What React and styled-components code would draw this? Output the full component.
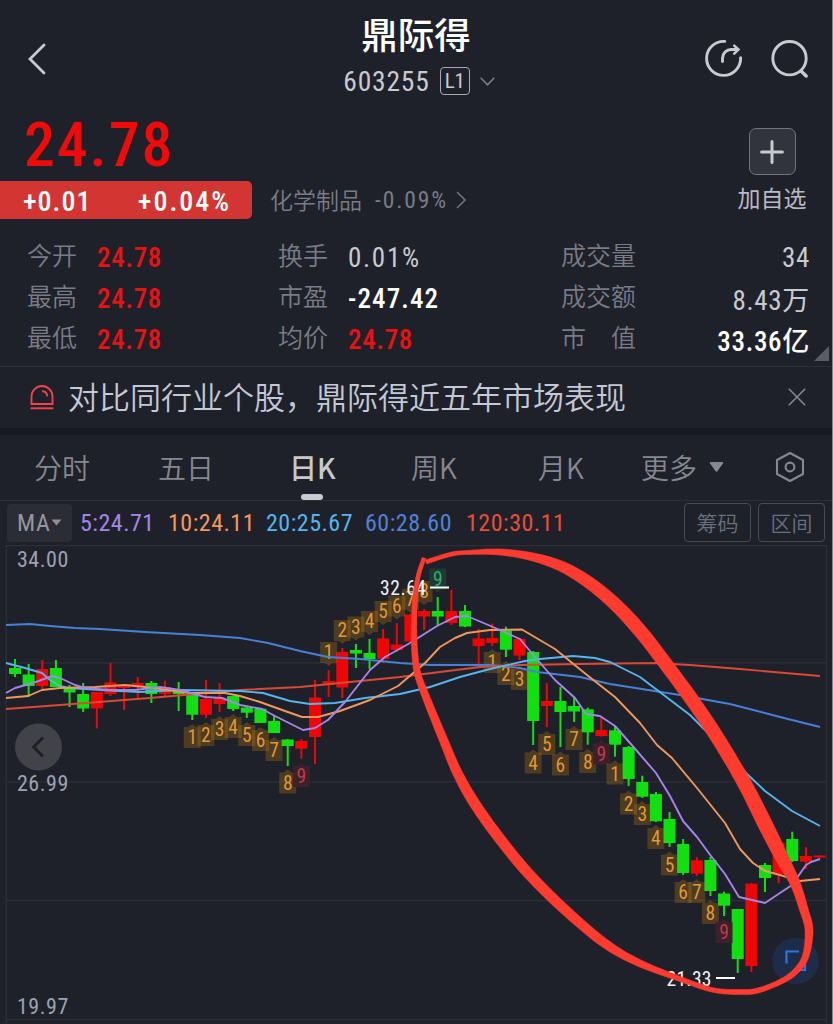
import styled, { createGlobalStyle } from "styled-components";

const colors = {
  background: "#1f212a",
  gap: "#181924",
  line: "#2c2f39",
  red: "#ec1111",
  candleRed: "#f00505",
  candleGreen: "#10e010",
  muted: "#797c87",
  light: "#c9cad0",
};

const numbers = `Roboto, "Noto Sans CJK SC", sans-serif`;

const GlobalStyle = createGlobalStyle`
  * {
    box-sizing: border-box;
  }

  body {
    margin: 0;
    background: ${colors.background};
    font-family: "Noto Sans CJK SC", sans-serif;
    font-stretch: 85%;
    overflow: hidden;
  }
`;

const stats = [
  [
    { label: "今开", value: "24.78", color: colors.red, weight: 500 },
    { label: "换手", value: "0.01%", color: colors.light, spacing: 1.7 },
    { label: "成交量", value: "34", color: colors.light },
  ],
  [
    { label: "最高", value: "24.78", color: colors.red, weight: 500 },
    { label: "市盈", value: "-247.42", color: "#fff", weight: 500, spacing: 1.1 },
    { label: "成交额", value: "8.43万", color: colors.light },
  ],
  [
    { label: "最低", value: "24.78", color: colors.red, weight: 500 },
    { label: "均价", value: "24.78", color: colors.red, weight: 500 },
    { label: "市　值", value: "33.36亿", color: "#fff", weight: 500 },
  ],
];

const tabs = ["分时", "五日", "日K", "周K", "月K"];

const averages = [
  { text: "5:24.71", color: "#a585ea", width: 88 },
  { text: "10:24.11", color: "#f5985a", width: 98 },
  { text: "20:25.67", color: "#55b5f0", width: 99 },
  { text: "60:28.60", color: "#4f82d6", width: 101 },
  { text: "120:30.11", color: "#e84f35", width: 110 },
];

// direction, body top, body bottom, wick top, wick bottom
const candles = [
  ["g", 668, 674, 659, 677], ["g", 674.5, 686, 664, 697], ["r", 669, 686, 660, 690],
  ["g", 668, 687, 660, 687], ["g", 687.5, 692.5, 685, 707], ["g", 694, 708.5, 683, 712],
  ["r", 692, 708.5, 692, 728.5], ["r", 682.5, 694, 663, 696], ["r", 685, 688, 684, 710],
  ["r", 683, 687, 677, 700], ["g", 683, 694, 681, 703], ["r", 687, 694, 681, 696],
  ["g", 689, 694, 682, 711], ["g", 694, 714.7, 694, 720], ["r", 699, 714.7, 680, 718],
  ["r", 698, 704, 683, 712], ["g", 696, 709, 696, 711], ["g", 707.5, 712.7, 707, 718],
  ["g", 708.7, 723, 708, 723], ["g", 721, 733, 715, 733], ["g", 739.5, 746, 739, 766],
  ["r", 741, 748.7, 739, 758.7], ["r", 697.5, 737, 680, 764], ["r", 681, 685, 670, 697],
  ["r", 652, 687.5, 648, 698], ["g", 650, 653.5, 644, 668], ["g", 653, 659, 639, 669],
  ["r", 638.5, 659, 629, 663], ["r", 644.5, 650, 623, 652], ["r", 614.5, 641.5, 614, 642],
  ["r", 611, 616.5, 609, 630], ["g", 611, 616.5, 597, 626], ["r", 611, 623, 590, 625],
  ["g", 611, 626.5, 605, 627], ["r", 638.5, 646, 629, 664], ["r", 638, 643, 623.5, 646],
  ["g", 630.7, 649.7, 626.7, 657], ["r", 639, 655.5, 638, 660], ["g", 652, 721, 651, 745],
  ["r", 701, 706, 683, 727], ["g", 701, 712, 687, 747], ["g", 706, 711.5, 697, 722],
  ["g", 709.3, 732.3, 707.7, 744.7], ["r", 730, 736, 716.7, 736.7], ["g", 730.3, 744.7, 725.7, 756.7],
  ["g", 747, 779, 746, 786], ["g", 782, 796.7, 775.7, 798], ["g", 794, 821.3, 792, 822],
  ["g", 819, 843, 812, 847], ["g", 844, 873, 839, 875], ["r", 860.3, 873.7, 857, 876],
  ["g", 860, 891, 857, 896], ["g", 893.5, 905.7, 891.7, 916], ["g", 909, 959, 909, 973],
  ["r", 883.7, 966, 883, 972], ["g", 865, 878, 863, 892], ["r", 842.7, 874, 842, 883],
  ["g", 839, 861, 831.7, 862], ["r", 856, 861.7, 847, 869], ["r", 855.5, 857.5, 855.5, 857.5],
];

const candleX = index => 15 + index * 13.636;

// candle index, digit, top of the box, side the tip is on
const marks = [
  [13, 1, 727, "up"], [14, 2, 725, "up"], [15, 3, 719, "up"], [16, 4, 717, "up"],
  [17, 5, 725, "up"], [18, 6, 730, "up"], [19, 7, 740, "up"], [20, 8, 772.5, "up"], [21, 9, 766, "up"],
  [23, 1, 642, "down"], [24, 2, 620, "down"], [25, 3, 616.5, "down"], [26, 4, 611, "down"],
  [27, 5, 601, "down"], [28, 6, 595.5, "down"], [29, 7, 588.7, "down"], [30, 8, 581, "down"], [31, 9, 568.5, "down"],
  [35, 1, 652, "up"], [36, 2, 664, "up"], [37, 3, 669, "up"], [38, 4, 752.5, "up"],
  [39, 5, 734, "up"], [40, 6, 754.5, "up"], [41, 7, 729, "up"], [42, 8, 752, "up"], [43, 9, 743.5, "up"],
  [44, 1, 763.5, "up"], [45, 2, 793.5, "up"], [46, 3, 804, "up"], [47, 4, 828, "up"],
  [48, 5, 854.5, "up"], [49, 6, 882, "up"], [50, 7, 882, "up"], [51, 8, 903, "up"], [52, 9, 922, "up"],
];

const lines = [
  {
    color: "#4681d8",
    points: [[6, 625], [30, 624], [50, 626], [75, 628], [100, 629], [130, 631], [145, 632], [200, 635], [240, 638],
      [268, 643], [300, 651], [328, 657], [360, 659], [400, 663], [430, 665], [490, 665], [520, 668], [537, 672],
      [580, 677], [610, 684], [680, 695], [730, 704], [780, 717], [820, 727]],
  },
  {
    color: "#d84a33",
    points: [[6, 709], [60, 705], [150, 698], [240, 690], [300, 687], [400, 677], [480, 667], [520, 665],
      [580, 664], [655, 663], [690, 665], [740, 669], [820, 676]],
  },
  {
    color: "#55b5f0",
    points: [[6, 663], [25, 668], [42, 673], [50, 680], [60, 686], [69, 688], [100, 690], [140, 692], [180, 690],
      [240, 691], [263, 693], [290, 701], [310, 704], [335, 703], [365, 698], [400, 694], [430, 687], [460, 677],
      [490, 669], [525, 661], [540, 659], [573, 656], [595, 658], [610, 662], [640, 677], [690, 715], [720, 745],
      [747, 774], [765, 791], [792, 811], [820, 826]],
  },
  {
    color: "#f0985c",
    points: [[6, 698], [28, 696], [42, 690], [60, 688], [95, 687], [125, 685], [145, 687], [190, 693], [225, 693],
      [240, 696], [260, 702], [285, 711], [302, 717], [318, 717], [340, 711], [370, 700], [398, 686], [425, 663],
      [440, 647], [455, 638], [467, 633], [490, 630], [522, 629.5], [555, 649], [587, 675], [615, 697], [640, 723],
      [657, 745], [672, 758], [697, 788], [725, 823], [740, 849], [753, 863], [765, 871], [780, 875], [800, 881], [820, 879]],
  },
  {
    color: "#a585ea",
    points: [[6, 693], [15, 688], [33, 683], [52, 676], [60, 678], [75, 685], [85, 688], [110, 690], [135, 690],
      [160, 687], [180, 690], [205, 697], [222, 698], [240, 705], [262, 709], [275, 716], [303, 730], [315, 728],
      [328, 720], [345, 702], [370, 670], [385, 657], [410, 643], [437, 626], [455, 617], [467, 616], [493, 627],
      [520, 639], [535, 657], [555, 680], [575, 698], [586, 714], [600, 716], [615, 726], [630, 743], [656, 773],
      [670, 796], [683, 821], [697, 837], [711, 856], [725, 874], [739, 897], [765, 903], [792, 885], [806, 865],
      [811, 862], [820, 859]],
  },
];

// x, y and thickness along the hand-drawn loop
const loop = [
  [424, 558, 4], [418, 577, 4], [415, 600, 5], [414, 630, 5.5], [415, 655, 6], [418, 675, 6.5], [428, 702, 7.5],
  [443.5, 740, 8.5], [457.5, 773, 9.5], [475, 804, 10.5], [500, 839, 10.5], [528, 873, 10.5], [562, 907, 10],
  [603, 942, 9], [637, 962, 7], [680, 979, 5], [713, 990, 4.5], [740, 992, 5], [758, 990.5, 5], [782, 981, 5],
  [797, 970, 6], [806, 955, 6.5], [809, 930, 8], [804, 910, 8.5], [795, 883, 10], [781.5, 857, 13],
  [766.5, 827, 14.5], [748, 790, 14], [731, 760, 13.5], [712.5, 730, 13.5], [690, 697, 13.5], [665, 663, 13.5],
  [641, 632, 13.5], [617, 606, 13], [591, 584, 12], [563, 567, 10.5], [533, 557, 8], [500, 552, 6],
  [467, 552.5, 4], [450, 554.5, 4], [426, 562, 4],
];

const curve = points => {
  const result = [];
  for (let i = 0; i < points.length - 1; i++) {
    const a = points[Math.max(i - 1, 0)];
    const b = points[i];
    const c = points[i + 1];
    const d = points[Math.min(i + 2, points.length - 1)];
    for (let t = 0; t < 1; t += 0.125) {
      result.push(b.map((_, k) => 0.5 * (
        2 * b[k] + (c[k] - a[k]) * t +
        (2 * a[k] - 5 * b[k] + 4 * c[k] - d[k]) * t * t +
        (3 * b[k] - a[k] - 3 * c[k] + d[k]) * t * t * t
      )));
    }
  }
  result.push(points[points.length - 1]);
  return result;
};

const toPath = points => "M" + points.map(([x, y]) => `${x.toFixed(1)} ${y.toFixed(1)}`).join("L");

const brush = points => {
  const center = curve(points);
  const left = [];
  const right = [];
  center.forEach(([x, y, width], i) => {
    const before = center[Math.max(i - 1, 0)];
    const after = center[Math.min(i + 1, center.length - 1)];
    const dx = after[0] - before[0];
    const dy = after[1] - before[1];
    const length = Math.hypot(dx, dy) || 1;
    const half = width / 2 / length;
    left.push([x - dy * half, y + dx * half]);
    right.unshift([x + dy * half, y - dx * half]);
  });
  return toPath([...left, ...right]) + "Z";
};

const Mark = ({ index, digit, top, side }) => {
  const x = candleX(index);
  const green = digit === 9 && side === "down";
  const red = digit === 9 && side === "up";
  const box = green ? "#1f3d34" : red ? "#40202b" : "#d98a0a";
  const text = green ? "#2fae6c" : red ? "#c23a46" : "#e3982f";
  const tip = side === "up"
    ? `M${x - 4} ${top}l4 -3l4 3z`
    : `M${x - 4} ${top + 21}l4 3l4 -3z`;

  return (
    <g>
      <path
        d={`M${x - 8.5} ${top}h17v21h-17z${tip}`}
        fill={box}
        fillOpacity={digit === 9 ? 0.9 : 0.25}
      />
      <MarkText x={x} y={top + 17.3} fill={text}>{digit}</MarkText>
    </g>
  );
};

const Chart = () => (
  <ChartSvg viewBox="0 545 833 479">
    <g stroke={colors.line} strokeWidth="1.3">
      <path d="M6 545.6H826M6 662.8H826M6 781.8H826M6 900.5H826M6 1019.5H826" />
      <path d="M6.2 545V1024M826.5 545V1024" />
    </g>
    {candles.map(([type, top, bottom, high, low], index) => (
      <g key={index} fill={type === "g" ? colors.candleGreen : colors.candleRed}>
        <rect x={candleX(index) - 1} y={high} width="2" height={low - high} />
        <rect x={candleX(index) - 6} y={top} width="12" height={bottom - top} />
      </g>
    ))}
    {marks.map(([index, digit, top, side]) => (
      <Mark key={index} index={index} digit={digit} top={top} side={side} />
    ))}
    {lines.map(({ color, points }) => (
      <path key={color} d={toPath(points)} fill="none" stroke={color} strokeWidth="1.9" strokeLinejoin="round" />
    ))}
    <PeakText x="380" y="594.5" textLength="46">32.64</PeakText>
    <PeakText x="666.5" y="985.5" textLength="45">21.33</PeakText>
    <path d="M430 587.5h19M716 978h19" stroke="#fff" strokeWidth="2" />
    <AxisText x="17" y="567">34.00</AxisText>
    <AxisText x="17" y="790.5">26.99</AxisText>
    <AxisText x="17" y="1014">19.97</AxisText>
    <circle cx="38.5" cy="747" r="23.5" fill="#424349" />
    <path d="M43 737.5l-9.5 9.5l9.5 9.5" fill="none" stroke="#1d1e24" strokeWidth="2.6" />
    <circle cx="795.5" cy="961" r="23.3" fill="#1c2c49" />
    <path d="M786.5 963.5v-12h12.5M793 970h12v-12" fill="none" stroke="#2f74e0" strokeWidth="2.2" />
    <path d={brush(loop)} fill="#ff3b30" stroke="#ff3b30" strokeWidth="0.6" strokeLinejoin="round" />
  </ChartSvg>
);

export default function App() {
  return (
    <Page>
      <GlobalStyle />
      <Header>
        <svg width="20" height="34" viewBox="0 0 20 34" fill="none" stroke="#c9cad0" strokeWidth="2.8" strokeLinecap="round">
          <path d="M17 3L3 17l14 14" />
        </svg>
        <Heading>
          <Title>鼎际得</Title>
          <Code>
            <Num $size={27.5} $spacing={0.8} $color={colors.light}>603255</Num>
            <Level>L1</Level>
            <svg width="15" height="9" viewBox="0 0 15 9" fill="none" stroke="#7c7f88" strokeWidth="1.6">
              <path d="M.7 .8l6.8 7l6.8-7" />
            </svg>
          </Code>
        </Heading>
        <HeaderIcons>
          <svg width="40" height="40" viewBox="0 0 40 40" fill="none" stroke="#c9cad0" strokeWidth="2.9" strokeLinecap="round">
            <path d="M20.8 2.4A17 17 0 1 0 36.6 18.8" />
            <path d="M18.5 22.5v-3.2a8.8 8.8 0 0 1 8.8-8.8h6.5" />
            <path d="M30.2 6.6l4.3 4l-4.3 4" strokeWidth="2.5" />
          </svg>
          <svg width="40" height="40" viewBox="0 0 40 40" fill="none" stroke="#c9cad0" strokeWidth="2.9" strokeLinecap="round">
            <circle cx="18.5" cy="19.2" r="16.7" />
            <path d="M30 32l5.2 5" strokeWidth="3.4" />
          </svg>
        </HeaderIcons>
      </Header>
      <Quote>
        <div>
          <Price>24.78</Price>
          <ChangeRow>
            <Change>
              <Num $size={28} $spacing={1} $weight={500} $color="#fff">+0.01</Num>
              <Num $size={28} $spacing={2} $weight={500} $color="#fff">+0.04%</Num>
            </Change>
            <Sector>
              <SectorName>化学制品</SectorName>
              <Num $size={23.5} $spacing={1.9} $color={colors.muted}>-0.09%</Num>
              <svg width="10" height="18" viewBox="0 0 10 18" fill="none" stroke="#6c707b" strokeWidth="1.7">
                <path d="M1 1l8 8l-8 8" />
              </svg>
            </Sector>
          </ChangeRow>
        </div>
        <Add>
          <AddBox>
            <svg width="24" height="24" viewBox="0 0 24 24" stroke="#c9cad0" strokeWidth="3" strokeLinecap="round">
              <path d="M12 1.6v20.8M1.6 12h20.8" />
            </svg>
          </AddBox>
          加自选
        </Add>
      </Quote>
      <Stats>
        {stats.flat().map(({ label, value, color, weight, spacing = 0.7 }) => (
          <Stat key={label}>
            <StatLabel>{label}</StatLabel>
            <Num $size={27} $spacing={spacing} $color={color} $weight={weight}>{value}</Num>
          </Stat>
        ))}
        <Corner />
      </Stats>
      <Notice>
        <svg width="24" height="25" viewBox="0 0 24 25" fill="none" stroke="#f0434c" strokeWidth="1.9">
          <path d="M1.5 19V11.5a10.5 10.5 0 0 1 21 0V19z" />
          <path d="M.5 23.3h23" />
          <path d="M12.8 6.3c2.3.3 4 2 4.4 4.3" strokeLinecap="round" />
        </svg>
        <NoticeText>对比同行业个股，鼎际得近五年市场表现</NoticeText>
        <svg width="18" height="18" viewBox="0 0 18 18" stroke="#858891" strokeWidth="1.6">
          <path d="M.8 .8l16.4 16.4M17.2 .8L.8 17.2" />
        </svg>
      </Notice>
      <Tabs>
        {tabs.map(tab => (
          <Tab key={tab} $active={tab === "日K"}>{tab}</Tab>
        ))}
        <Tab>
          更多
          <svg width="15" height="10" viewBox="0 0 15 10" fill="#858791">
            <path d="M1.5 0h12q1.4 0 .6 1.2L8.4 9.2q-.9 1-1.8 0L.9 1.2Q.1 0 1.5 0z" />
          </svg>
        </Tab>
        <svg width="30" height="32" viewBox="0 0 30 32" fill="none" stroke="#858791" strokeWidth="2.1" strokeLinejoin="round">
          <path d="M15 2l13 7v14l-13 7l-13-7V9z" />
          <circle cx="15" cy="16" r="4.4" />
        </svg>
      </Tabs>
      <Indicators>
        <Picker>
          MA
          <svg width="11" height="7" viewBox="0 0 11 7" fill="#8f9096">
            <path d="M.5 .5h10l-5 6z" />
          </svg>
        </Picker>
        {averages.map(({ text, color, width }) => (
          <Average key={text} $color={color} $width={width}>{text}</Average>
        ))}
        <Buttons>
          <Button>筹码</Button>
          <Button>区间</Button>
        </Buttons>
      </Indicators>
      <Chart />
    </Page>
  );
}

const Page = styled.main`
  width: 833px;
  height: 1024px;
  background: ${colors.background};
  border-right: 1px solid #85868c;
  overflow: hidden;
`;

const Num = styled.span`
  font-family: ${numbers};
  font-size: ${({ $size }) => $size}px;
  font-weight: ${({ $weight }) => $weight || 400};
  letter-spacing: ${({ $spacing }) => $spacing}px;
  color: ${({ $color }) => $color};
  white-space: nowrap;
`;

const Header = styled.header`
  display: grid;
  grid-template-columns: 200px 1fr 200px;
  align-items: center;
  height: 118px;
  padding-left: 27px;
  padding-right: 21px;
`;

const Heading = styled.div`
  display: flex;
  flex-direction: column;
  align-items: center;
  height: 100px;
  padding-top: 2px;
  padding-right: 6px;
`;

const Title = styled.h1`
  margin: 0;
  font-size: 36.5px;
  font-weight: 500;
  line-height: 46px;
  color: #fff;
`;

const Code = styled.div`
  display: flex;
  align-items: center;
  gap: 10px;
  height: 40px;
  margin-top: 4px;
  padding-left: 6px;
`;

const Level = styled.span`
  display: flex;
  align-items: center;
  justify-content: center;
  width: 30px;
  height: 28px;
  border: 1.5px solid #a9abb3;
  border-radius: 4px;
  font-family: ${numbers};
  font-size: 21px;
  letter-spacing: -0.3px;
  color: ${colors.light};
`;

const HeaderIcons = styled.div`
  display: flex;
  justify-content: flex-end;
  gap: 27px;
`;

const Quote = styled.section`
  display: flex;
  justify-content: space-between;
  height: 117px;
`;

const Price = styled.div`
  height: 63px;
  padding-left: 24px;
  font-family: ${numbers};
  font-size: 62px;
  font-weight: 500;
  line-height: 54px;
  letter-spacing: 1.8px;
  color: #f00a0a;
`;

const ChangeRow = styled.div`
  display: flex;
  align-items: center;
`;

const Change = styled.div`
  display: flex;
  align-items: center;
  justify-content: space-between;
  width: 252px;
  height: 38px;
  padding: 3px 21px 0 23px;
  border-radius: 0 5px 5px 0;
  background: #d33532;
`;

const Sector = styled.div`
  display: flex;
  align-items: center;
  gap: 8px;
  padding-left: 18px;
  color: ${colors.muted};
`;

const SectorName = styled.span`
  margin-right: 5px;
  margin-top: -3px;
  font-size: 23px;
  font-weight: 350;
`;

const Add = styled.div`
  display: flex;
  flex-direction: column;
  align-items: center;
  width: 120px;
  padding-top: 10px;
  font-size: 23px;
  line-height: 45px;
  color: #b9bac2;
`;

const AddBox = styled.div`
  display: flex;
  align-items: center;
  justify-content: center;
  width: 47px;
  height: 47px;
  border: 1px solid #73757d;
  border-radius: 7px;
  background: #31333d;
`;

const Stats = styled.section`
  position: relative;
  display: grid;
  grid-template-columns: 251px 283px 1fr;
  grid-auto-rows: 41px;
  height: 131px;
  padding: 2px 22px 0 27px;
`;

const Stat = styled.div`
  display: flex;
  align-items: center;
  gap: 20px;

  &:nth-child(3n) {
    justify-content: space-between;
  }
`;

const StatLabel = styled.span`
  margin-top: -7px;
  font-size: 25px;
  font-weight: 350;
  color: ${colors.muted};
`;

const Corner = styled.i`
  position: absolute;
  right: 3px;
  bottom: 5px;
  width: 15px;
  height: 15px;
  background: #5b5d66;
  clip-path: polygon(100% 0, 100% 100%, 0 100%);
`;

const Notice = styled.section`
  display: flex;
  align-items: center;
  height: 69px;
  padding: 0 26px 1px 30px;
  border-top: 1px solid ${colors.line};
  border-bottom: 7px solid ${colors.gap};
`;

const NoticeText = styled.p`
  flex: 1;
  margin: -3px 0 0 14px;
  font-size: 31px;
  font-weight: 350;
  line-height: 50px;
  color: #c3c9d6;
`;

const Tabs = styled.nav`
  display: grid;
  grid-template-columns: 124px 131px 122px 127px 103px 134px auto;
  align-items: center;
  justify-content: start;
  height: 66px;
  padding-left: 34px;
  padding-bottom: 2px;
  border-bottom: 1px solid ${colors.line};
`;

const Tab = styled.div`
  position: relative;
  display: flex;
  align-items: center;
  gap: 12px;
  font-size: 28px;
  font-weight: ${({ $active }) => ($active ? 500 : 350)};
  color: ${({ $active }) => ($active ? "#c8c9cc" : "#858791")};

  &::after {
    content: "";
    display: ${({ $active }) => ($active ? "block" : "none")};
    position: absolute;
    left: 12px;
    bottom: -13px;
    width: 22px;
    height: 6px;
    border-radius: 3px;
    background: #c9cace;
  }
`;

const Indicators = styled.section`
  display: flex;
  align-items: center;
  height: 44px;
  padding: 0 7px 1px 7px;
`;

const Picker = styled.div`
  display: flex;
  align-items: center;
  gap: 1px;
  width: 65px;
  height: 38px;
  margin-right: 8px;
  padding-left: 10px;
  border-radius: 4px;
  background: #2b2c36;
  font-family: ${numbers};
  font-size: 24px;
  letter-spacing: 0.6px;
  color: #96979c;
`;

const Average = styled.span`
  width: ${({ $width }) => $width}px;
  padding-top: 1px;
  font-family: ${numbers};
  font-size: 24px;
  letter-spacing: 0.5px;
  white-space: nowrap;
  color: ${({ $color }) => $color};
`;

const Buttons = styled.div`
  display: flex;
  gap: 7px;
  margin-left: auto;
`;

const Button = styled.button`
  width: 67px;
  height: 39px;
  padding: 0 0 2px;
  border: 1.5px solid #434c57;
  border-radius: 4px;
  background: none;
  font-family: inherit;
  font-size: 21px;
  font-weight: 350;
  color: #65717d;
`;

const ChartSvg = styled.svg`
  display: block;
  width: 833px;
  height: 479px;
`;

const MarkText = styled.text`
  font-family: ${numbers};
  font-size: 19.5px;
  text-anchor: middle;
`;

const PeakText = styled.text`
  font-family: ${numbers};
  font-size: 19.5px;
  fill: #f2f2f4;
`;

const AxisText = styled.text`
  font-family: ${numbers};
  font-size: 22px;
  letter-spacing: 0.5px;
  fill: #9ba2b2;
`;
